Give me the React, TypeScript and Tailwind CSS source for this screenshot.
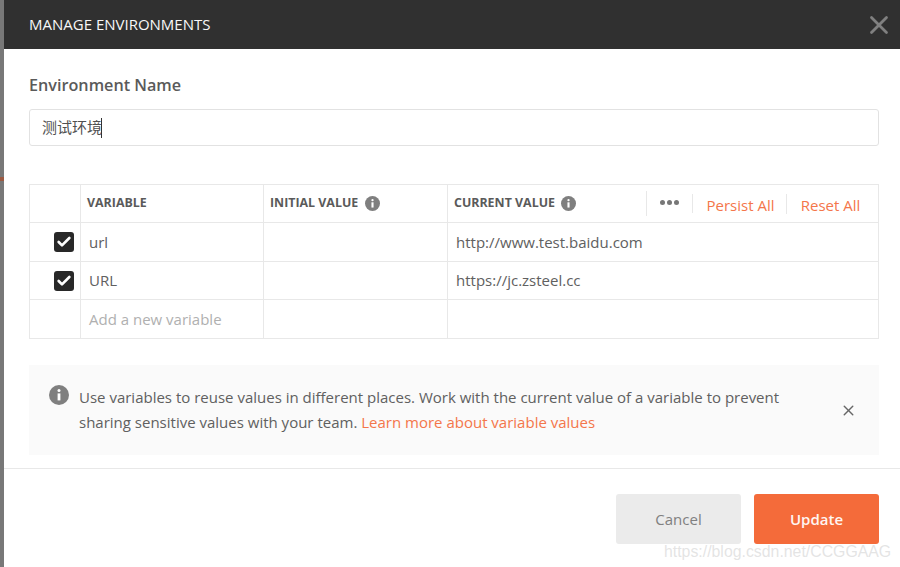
import { Check, X } from 'lucide-react';

const sans = "font-['Open_Sans','Noto_Sans_CJK_SC',sans-serif]";

function InfoIcon({ size }: { size: number }) {
  return (
    <svg width={size} height={size} viewBox="0 0 20 20" className="shrink-0">
      <circle cx="10" cy="10" r="10" fill="#7f7f7f" />
      <circle cx="10" cy="5.6" r="1.5" fill="#fff" />
      <rect x="8.6" y="8.4" width="2.8" height="7" fill="#fff" />
    </svg>
  );
}

function Checkbox() {
  return (
    <div className="flex h-5 w-5 items-center justify-center rounded-[3px] bg-[#282828]">
      <Check size={16} strokeWidth={4} className="text-white" />
    </div>
  );
}

const rows = [
  { key: 'url', current: 'http://www.test.baidu.com', h: 'h-[39px]' },
  { key: 'URL', current: 'https://jc.zsteel.cc', h: 'h-[38px]' },
];

export default function App() {
  return (
    <div className={`relative flex h-[567px] w-[900px] overflow-hidden bg-white ${sans}`}>
      {/* Backdrop strip behind the modal */}
      <div className="flex w-1 shrink-0 flex-col bg-[#787878]">
        <div className="mt-[177px] h-[4px] bg-[#9c5a42]" />
      </div>

      <div className="flex min-w-0 flex-1 flex-col">
        <div className="flex h-[49px] shrink-0 items-center justify-between bg-[#303030] pl-[25px] pr-[6px]">
          <span className="text-[15px] font-medium text-[#f8f8f8]">MANAGE ENVIRONMENTS</span>
          <X size={30} strokeWidth={2.2} className="text-[#808080]" />
        </div>

        <div className="flex flex-col pl-[25px] pr-[21px]">
          <div className="mt-[25px] text-[16.2px] leading-[22px] font-semibold text-[#5a5a5a]">Environment Name</div>
          <div className="mt-[13px] flex h-[37px] items-center rounded-[3px] border border-[#e2e2e2] pl-[12px] text-[15px] text-[#505050]">
            测试环境
            <span className="-ml-px h-5 w-px bg-[#333]" />
          </div>

          <div className="mt-[38px] flex flex-col border border-[#e8e8e8] text-[15px] text-[#606060]">
            <div className="flex h-[38px] border-b border-[#e8e8e8]">
              <div className="w-[51px] shrink-0 border-r border-[#e8e8e8]" />
              <div className="flex w-[183px] shrink-0 items-center border-r border-[#e8e8e8] pb-px pl-[6px] text-[12.4px] font-bold text-[#5a5a5a]">
                VARIABLE
              </div>
              <div className="flex w-[184px] shrink-0 items-center gap-[7px] border-r border-[#e8e8e8] pb-px pl-[6px] text-[12.4px] font-bold text-[#5a5a5a]">
                INITIAL VALUE <InfoIcon size={15} />
              </div>
              <div className="flex flex-1 items-center">
                <div className="my-[6px] flex w-[199px] shrink-0 items-center gap-[6px] self-stretch border-r border-[#e8e8e8] pb-px pl-[6px] text-[12.4px] font-bold text-[#5a5a5a]">
                  CURRENT VALUE <InfoIcon size={15} />
                </div>
                <div className="my-[9px] flex w-[46px] shrink-0 items-center justify-center gap-[2px] self-stretch border-r border-[#e8e8e8] pb-[2px]">
                  <span className="h-[5px] w-[5px] rounded-full bg-[#777]" />
                  <span className="h-[5px] w-[5px] rounded-full bg-[#777]" />
                  <span className="h-[5px] w-[5px] rounded-full bg-[#777]" />
                </div>
                <div className="flex h-5 w-[94px] shrink-0 items-center justify-center border-r border-[#e8e8e8] pt-[3px] pl-[2px] text-[#f4764a]">
                  Persist All
                </div>
                <div className="flex flex-1 justify-center pt-[3px] pr-[4px] text-[#f4764a]">Reset All</div>
              </div>
            </div>

            {rows.map((r) => (
              <div key={r.key} className={`flex ${r.h} border-b border-[#e8e8e8]`}>
                <div className="flex w-[51px] shrink-0 items-center justify-end border-r border-[#e8e8e8] pr-[6px]">
                  <Checkbox />
                </div>
                <div className="flex w-[183px] shrink-0 items-center border-r border-[#e8e8e8] pl-[8px]">{r.key}</div>
                <div className="w-[184px] shrink-0 border-r border-[#e8e8e8]" />
                <div className="flex flex-1 items-center pl-[8px]">{r.current}</div>
              </div>
            ))}

            <div className="flex h-[38px]">
              <div className="w-[51px] shrink-0 border-r border-[#e8e8e8]" />
              <div className="flex w-[183px] shrink-0 items-center border-r border-[#e8e8e8] pl-[8px] text-[#b0b0b0]">
                Add a new variable
              </div>
              <div className="w-[184px] shrink-0 border-r border-[#e8e8e8]" />
            </div>
          </div>

          <div className="mt-[26px] flex h-[90px] items-center bg-[#fafafa] pl-[20px] pr-[22px]">
            <div className="flex flex-1 items-start gap-[10px] self-start pt-[20px]">
              <InfoIcon size={20} />
              <div className="text-[15px] leading-[25px] text-[#606060]">
                <p>Use variables to reuse values in different places. Work with the current value of a variable to prevent</p>
                <p>
                  sharing sensitive values with your team. <span className="text-[#f4764a]">Learn more about variable values</span>
                </p>
              </div>
            </div>
            <X size={17} strokeWidth={2} className="text-[#666]" />
          </div>
        </div>

        <div className="mt-[13px] border-t border-[#e8e8e8]" />

        <div className="flex justify-end gap-[13px] pt-[25px] pr-[21px]">
          <button className="h-[50px] w-[125px] rounded-[3px] bg-[#ebebeb] text-[15px] font-medium text-[#808080]">
            Cancel
          </button>
          <button className="h-[50px] w-[125px] rounded-[3px] bg-[#f46b3a] text-[15px] font-semibold text-[#fff6f2]">
            Update
          </button>
        </div>
      </div>

      {/* Watermark stamped over the screenshot */}
      <span className="absolute left-[664px] top-[540px] font-['Liberation_Sans',sans-serif] text-[15.85px] text-[#d8d8d8]/70">
        https://blog.csdn.net/CCGGAAG
      </span>
    </div>
  );
}
